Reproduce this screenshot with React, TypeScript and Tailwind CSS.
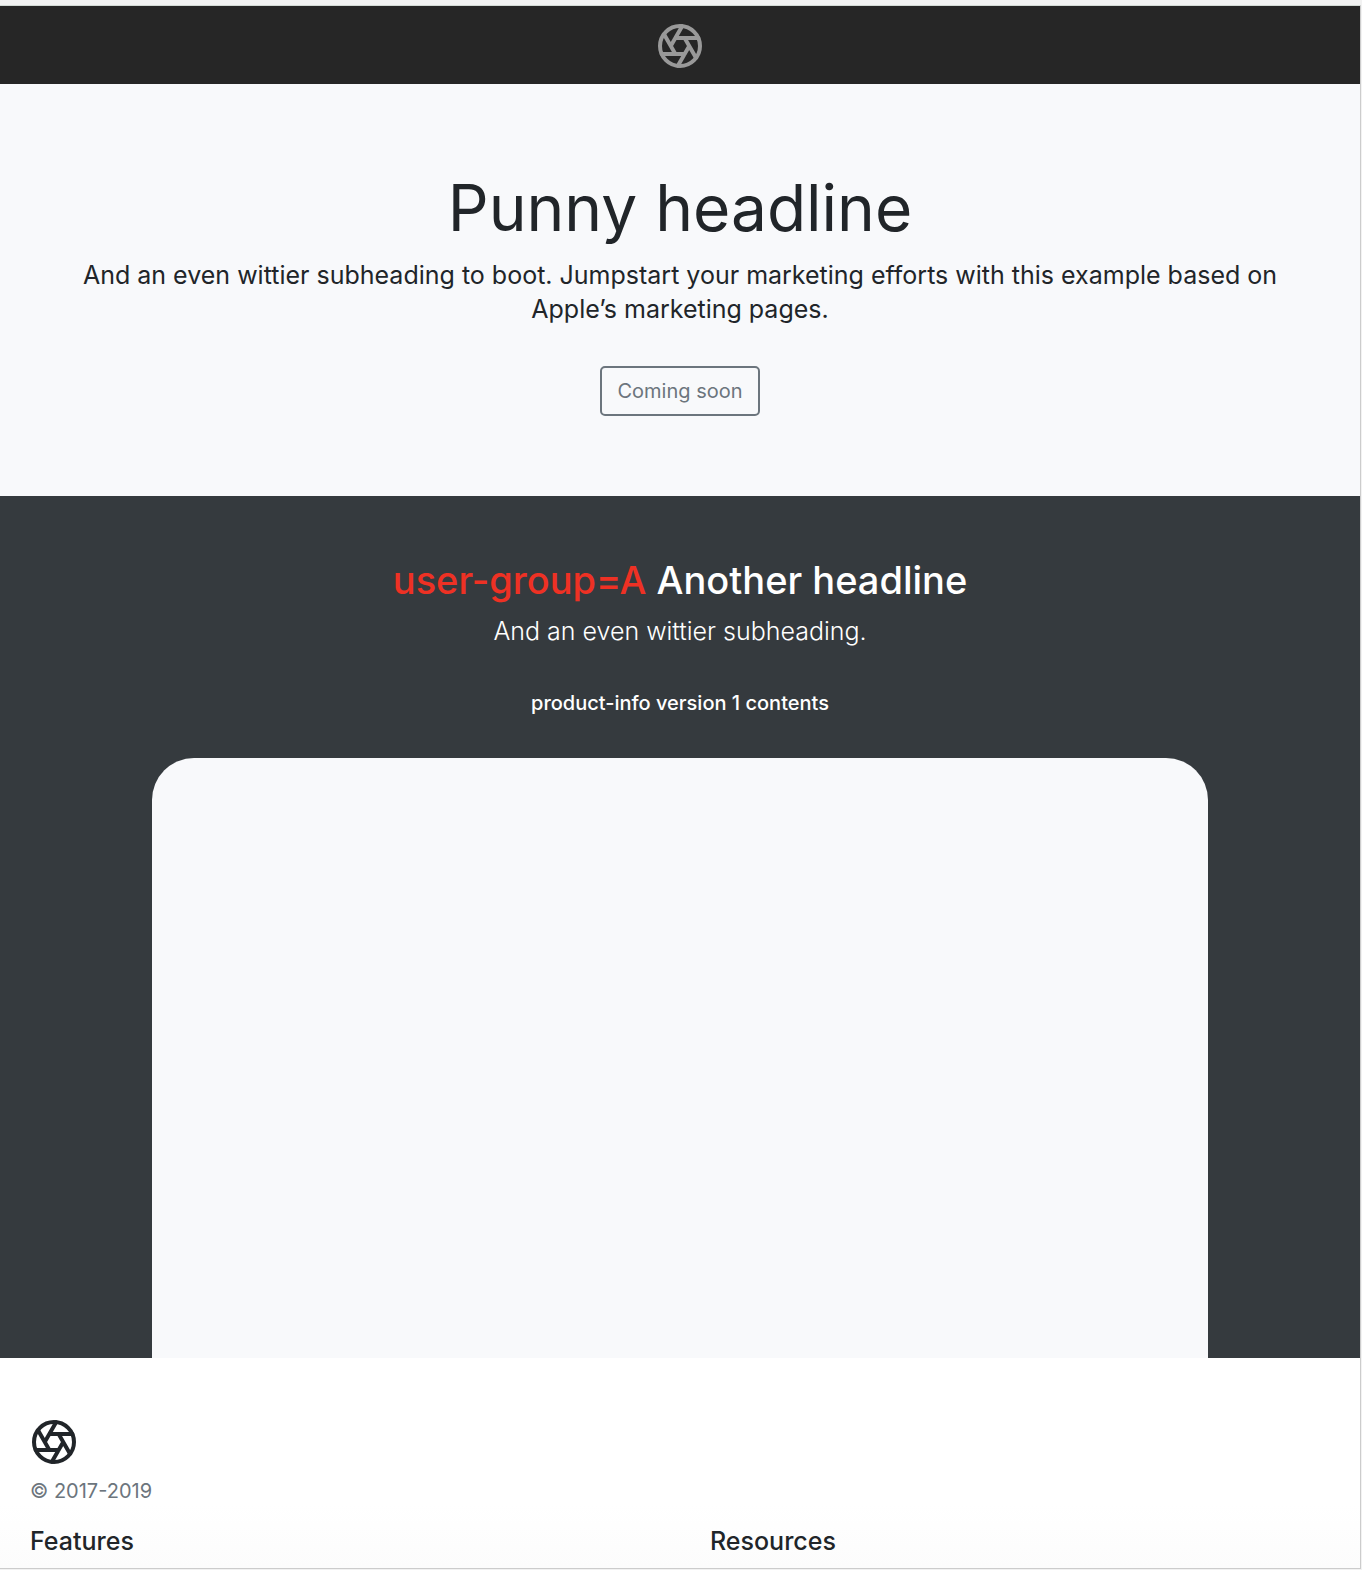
function Aperture({ className }: { className: string }) {
  return (
    <svg viewBox="0 0 24 24" className={className} fill="none" stroke="currentColor" strokeWidth="2" strokeLinecap="round" strokeLinejoin="round" aria-hidden="true">
      <circle cx="12" cy="12" r="10" />
      <path d="M14.31 8l5.74 9.94M9.69 8h11.48M7.38 12l5.74-9.94M9.69 16L3.95 6.06M14.31 16H2.83m13.79-4l-5.74 9.94" />
    </svg>
  );
}

export default function App() {
  return (
    <div className="flex min-h-screen flex-col bg-[#f2f2f2] pt-[5px] pr-px pb-px font-[Inter,sans-serif] text-[#212529]">
      <div className="flex grow flex-col border-t border-r border-b border-t-[#d3dad5] border-r-[#cccccc] border-b-[#cccccc] bg-white">
        <header className="flex h-[78px] items-center justify-center bg-[#262626] pt-0.5">
          <a href="#" aria-label="Product" className="text-[#999999]">
            <Aperture className="size-12" />
          </a>
        </header>
        <main>
          <section className="flex flex-col items-center bg-[#f8f9fb] px-20 pt-[82px] pb-20 text-center">
            <h1 className="text-[64px] leading-[84px]">Punny headline</h1>
            <p className="mt-2 text-[25px] leading-[34px]">
              And an even wittier subheading to boot. Jumpstart your marketing efforts with this example based on Apple’s marketing pages.
            </p>
            <button type="button" className="mt-10 h-[50px] rounded-[5px] border-2 border-[#6c757d] px-[15px] text-xl text-[#6c757d]">
              Coming soon
            </button>
          </section>
          <section className="flex flex-col items-center bg-[#353a3e] px-[152px] pt-[60px] text-center text-white">
            <h2 className="text-[38px] leading-[48px] font-medium">
              <span className="text-[#ee3124]">user-group=A</span> Another headline
            </h2>
            <p className="mt-2 text-[25px] leading-[38px] font-light">And an even wittier subheading.</p>
            <p className="mt-[38px] text-xl leading-[30px] font-medium">product-info version 1 contents</p>
            <div className="mt-10 h-[600px] w-full rounded-t-[42px] bg-[#f8f9fb]" />
          </section>
        </main>
        <footer className="grow bg-linear-to-b from-white from-70% to-[#fcfcfc] pt-[60px]">
          <div className="px-[30px]">
            <Aperture className="size-12" />
            <small className="mt-2.5 block text-xl leading-[30px] text-[#6c757d]">© 2017-2019</small>
          </div>
          <div className="mt-4 grid grid-cols-2 text-[25px] leading-[38px] font-medium">
            <h5 className="px-[30px]">Features</h5>
            <h5 className="px-[30px]">Resources</h5>
          </div>
        </footer>
      </div>
    </div>
  );
}
